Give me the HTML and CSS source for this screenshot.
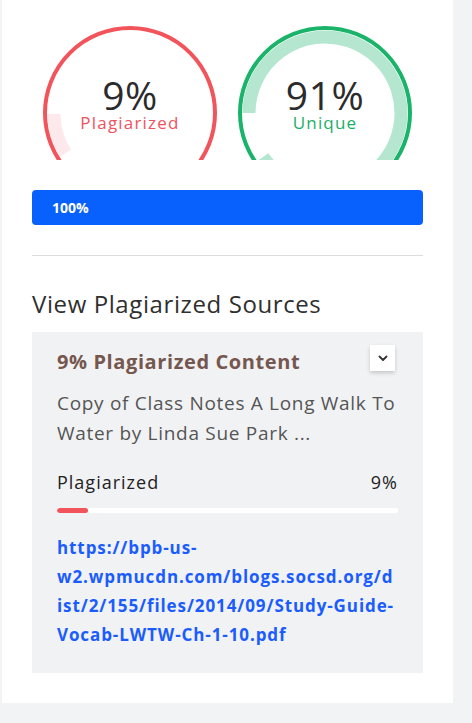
FILE: index.html
```html
<!DOCTYPE html>
<html lang="en">
<head>
<meta charset="utf-8">
<title>Plagiarism Report</title>
<link rel="stylesheet" href="styles.css">
</head>
<body>
<main class="panel">
  <section class="gauges">
    <div class="gauge gauge-red">
      <svg class="ring" width="174" height="174" viewBox="0 0 174 174">
        <circle cx="87" cy="87" r="85" fill="none" stroke="#f2545b" stroke-width="4"/>
        <path d="M11 88 A76 76 0 0 0 22.6 127.3" fill="none" stroke="#fde9ec" stroke-width="13"/>
      </svg>
      <div class="gauge-text">
        <div class="gauge-num">9%</div>
        <div class="gauge-label label-red">Plagiarized</div>
      </div>
    </div>
    <div class="gauge gauge-green">
      <svg class="ring" width="174" height="174" viewBox="0 0 174 174">
        <circle cx="87" cy="87" r="85" fill="none" stroke="#19b46a" stroke-width="4"/>
        <path d="M11 87 A76 76 0 1 1 25 131" fill="none" stroke="#b5e6cf" stroke-width="13"/>
      </svg>
      <div class="gauge-text">
        <div class="gauge-num">91%</div>
        <div class="gauge-label label-green">Unique</div>
      </div>
    </div>
  </section>

  <div class="progress"><span class="progress-text">100%</span></div>

  <hr class="divider">

  <h2 class="sources-title">View Plagiarized Sources</h2>

  <article class="source-card">
    <div class="card-head">
      <h3 class="card-title">9% Plagiarized Content</h3>
      <button class="toggle" aria-label="Expand">
        <svg width="10" height="7" viewBox="0 0 10 7"><path d="M1.5 1.5 L5 5 L8.5 1.5" fill="none" stroke="#333" stroke-width="1.8" stroke-linecap="round" stroke-linejoin="round"/></svg>
      </button>
    </div>
    <p class="card-desc">Copy of Class Notes A Long Walk To Water by Linda Sue Park ...</p>
    <div class="stat-row">
      <span class="stat-label">Plagiarized</span>
      <span class="stat-value">9%</span>
    </div>
    <div class="stat-bar"><div class="stat-fill" style="width:9%"></div></div>
    <a class="source-link" href="#">https://bpb-us-w2.wpmucdn.com/blogs.socsd.org/dist/2/155/files/2014/09/Study-Guide-Vocab-LWTW-Ch-1-10.pdf</a>
  </article>
</main>
</body>
</html>
```

FILE: styles.css
```css
* { box-sizing: border-box; }

html, body {
  margin: 0;
  padding: 0;
}

body {
  background: #f2f3f5;
  font-family: "Open Sans", "Liberation Sans", sans-serif;
  color: #333;
  height: 723px;
  overflow: hidden;
}

.panel {
  margin-left: 2px;
  width: 451px;
  height: 703px;
  background: #ffffff;
  padding: 26px 30px 0 30px;
}

.gauges {
  display: flex;
  justify-content: center;
  gap: 21px;
  height: 134px;
  overflow: hidden;
}

.gauge {
  display: grid;
  width: 174px;
  height: 174px;
}

.ring,
.gauge-text {
  grid-area: 1 / 1;
}

.gauge-text {
  display: flex;
  flex-direction: column;
  align-items: center;
  padding-top: 50px;
}

.gauge-num {
  font-size: 39px;
  line-height: 38px;
  font-weight: 500;
  color: #2b2b2b;
  letter-spacing: 0.5px;
}

.gauge-label {
  font-size: 17px;
  line-height: 18px;
  font-weight: 500;
  letter-spacing: 1.2px;
}

.label-red { color: #ef5360; }
.label-green { color: #1cae68; }

.progress {
  margin-top: 30px;
  height: 35px;
  background: #0961fd;
  border-radius: 4px;
  display: flex;
  align-items: center;
  padding-left: 20px;
}

.progress-text {
  color: #fff;
  font-size: 14px;
  font-weight: 700;
}

.divider {
  margin: 30px 0 0 0;
  border: 0;
  border-top: 1px solid #dcdcdc;
  height: 0;
}

.sources-title {
  margin: 33px 0 0 0;
  font-size: 24px;
  line-height: 30px;
  font-weight: 500;
  color: #2f2f2f;
  letter-spacing: 0.6px;
}

.source-card {
  margin-top: 13px;
  background: #f1f2f4;
  padding: 17px 25px 0 25px;
  height: 341px;
}

.card-head {
  display: flex;
  justify-content: space-between;
  align-items: flex-start;
}

.card-title {
  margin: 0;
  font-size: 20px;
  line-height: 26px;
  font-weight: 700;
  color: #76574f;
  letter-spacing: 0.6px;
}

.toggle {
  width: 25px;
  height: 26px;
  margin: -4px 3px 0 0;
  padding: 0;
  border: 0;
  background: #fff;
  box-shadow: 0 2px 4px rgba(0, 0, 0, 0.18);
  display: flex;
  align-items: center;
  justify-content: center;
}

.card-desc {
  margin: 13px 0 0 0;
  font-size: 19px;
  line-height: 30px;
  color: #555;
  letter-spacing: 0.7px;
}

.stat-row {
  margin-top: 22px;
  display: flex;
  justify-content: space-between;
  font-size: 18px;
  line-height: 24px;
  font-weight: 500;
  color: #222;
  letter-spacing: 1px;
}

.stat-bar {
  margin-top: 14px;
  height: 5px;
  border-radius: 3px;
  background: #fff;
  overflow: hidden;
}

.stat-fill {
  height: 100%;
  background: #f2545b;
  border-radius: 3px;
}

.source-link {
  display: block;
  margin-top: 20px;
  font-size: 17px;
  line-height: 29px;
  font-weight: 700;
  color: #1a5cff;
  text-decoration: none;
  letter-spacing: 0.9px;
  overflow-wrap: anywhere;
}
```
